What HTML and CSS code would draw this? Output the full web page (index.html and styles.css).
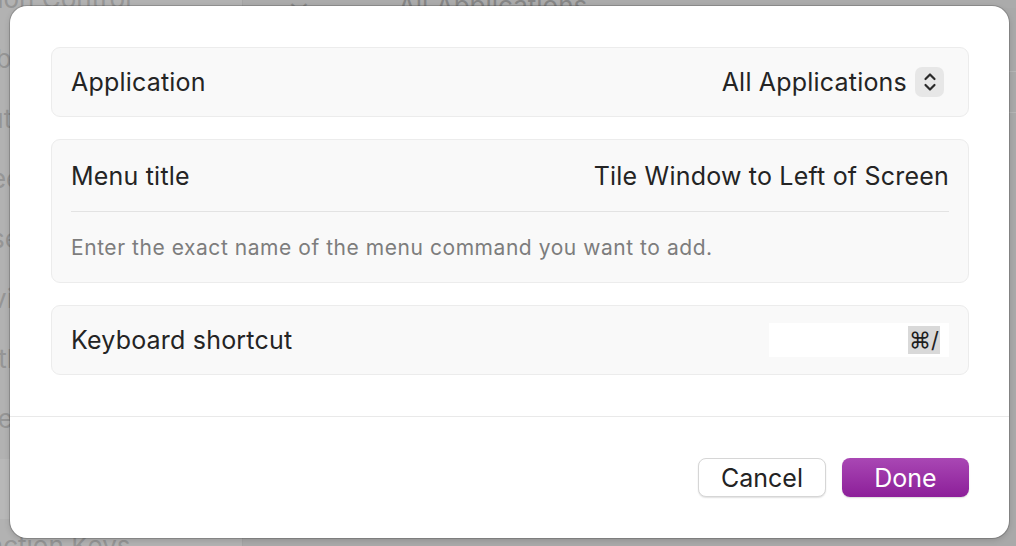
FILE: index.html
```html
<!DOCTYPE html>
<html>
<head>
<meta charset="utf-8">
<link rel="stylesheet" href="styles.css">
</head>
<body>
<div class="backdrop">
  <div class="bg-sidebar">
    <div class="bg-item first">Mission Control</div>
    <div class="bg-item">Keyboard</div>
    <div class="bg-item">Input Sources</div>
    <div class="bg-item">Screenshots</div>
    <div class="bg-item">Presentation</div>
    <div class="bg-item">Services</div>
    <div class="bg-item">Spotlight</div>
    <div class="bg-item">Accessibility</div>
    <div class="bg-item sel">App Shortcuts</div>
    <div class="bg-item last">Function Keys</div>
  </div>
  <div class="bg-main">
    <div class="bg-head"><span class="bg-chev">⌄</span><span class="bg-app">All Applications</span></div>
    <div class="bg-line"></div>
    <div class="bg-line second"></div>
  </div>
</div>

<div class="dialog">
  <div class="content">
    <div class="group">
      <div class="row">
        <span class="label">Application</span>
        <div class="popup">
          <span class="value">All Applications</span>
          <span class="stepper">
            <svg width="14" height="22" viewBox="0 0 14 22"><path d="M2.5 8 L7 3.5 L11.5 8" fill="none" stroke="#2a2a2a" stroke-width="2.2" stroke-linecap="round" stroke-linejoin="round"/><path d="M2.5 14 L7 18.5 L11.5 14" fill="none" stroke="#2a2a2a" stroke-width="2.2" stroke-linecap="round" stroke-linejoin="round"/></svg>
          </span>
        </div>
      </div>
    </div>

    <div class="group">
      <div class="row title-row">
        <span class="label">Menu title</span>
        <span class="value">Tile Window to Left of Screen</span>
      </div>
      <div class="sep"></div>
      <div class="row hint-row">
        <span class="hint">Enter the exact name of the menu command you want to add.</span>
      </div>
    </div>

    <div class="group">
      <div class="row">
        <span class="label">Keyboard shortcut</span>
        <div class="shortcut"><span class="keys">⌘/</span></div>
      </div>
    </div>
  </div>

  <div class="footer">
    <button class="btn cancel">Cancel</button>
    <button class="btn done">Done</button>
  </div>
</div>
</body>
</html>
```

FILE: styles.css
```css
html, body {
  margin: 0;
  padding: 0;
  width: 1016px;
  height: 546px;
  overflow: hidden;
  font-family: "Inter", "Liberation Sans", sans-serif;
}

.backdrop {
  width: 1016px;
  height: 546px;
  display: flex;
  background: #a9a9a9;
  color: #959595;
}

.bg-sidebar {
  width: 242px;
  background: #b2b2b2;
  border-right: 1px solid #a4a4a4;
  display: flex;
  flex-direction: column;
  overflow: hidden;
}

.bg-item {
  flex: none;
  height: 60px;
  width: 80px;
  overflow: hidden;
  line-height: 40px;
  font-size: 26px;
  margin-left: -50px;
  white-space: nowrap;
}

.bg-item.first {
  width: auto;
  margin-top: -21px;
  margin-left: -60px;
}

.bg-item.sel {
  width: 292px;
  background: #b8b8b8;
  color: transparent;
}

.bg-item.last {
  width: auto;
  margin-left: -42px;
  margin-top: 7px;
}

.bg-main {
  flex: 1;
  display: flex;
  flex-direction: column;
}

.bg-head {
  height: 8px;
  overflow: hidden;
  display: flex;
  align-items: flex-end;
  background: #ababab;
}

.bg-chev {
  margin-left: 45px;
  font-size: 28px;
  line-height: 10px;
  height: 10px;
  color: #8a8a8a;
}

.bg-app {
  margin-left: 88px;
  font-size: 26px;
  line-height: 16px;
  height: 10px;
  color: #858585;
}

.bg-line {
  height: 1px;
  background: #b6b6b6;
  margin-top: 63px;
}

.bg-line.second {
  margin-top: 40px;
}

.dialog {
  position: absolute;
  left: 10px;
  top: 6px;
  width: 999px;
  height: 532px;
  box-sizing: border-box;
  background: #ffffff;
  border-radius: 17px;
  box-shadow: 0 0 0 1px rgba(0,0,0,0.16), 0 2px 6px rgba(0,0,0,0.16);
  display: flex;
  flex-direction: column;
  color: #242424;
}

.content {
  padding: 41px 40px 0 41px;
  display: flex;
  flex-direction: column;
  gap: 22px;
  box-sizing: border-box;
  border-bottom: 1px solid #e9e9e9;
  flex: none;
  height: 411px;
}

.group {
  background: #f9f9f9;
  border: 1px solid #ececec;
  border-radius: 9px;
  display: flex;
  flex-direction: column;
}

.row {
  height: 68px;
  padding: 0 19px 0 19px;
  display: flex;
  align-items: center;
  justify-content: space-between;
}

.title-row {
  height: 71px;
}

.hint-row {
  height: 70px;
}

.label, .value {
  font-size: 25px;
  letter-spacing: 0.2px;
}

.popup {
  display: flex;
  align-items: center;
  gap: 8px;
  margin-right: 5px;
}

.stepper {
  width: 29px;
  height: 30px;
  background: #e7e7e7;
  border-radius: 7px;
  display: flex;
  align-items: center;
  justify-content: center;
}

.sep {
  height: 1px;
  background: #e3e3e3;
  margin: 0 19px 0 19px;
}

.hint {
  font-size: 21px;
  color: #7d7d7d;
  letter-spacing: 0.55px;
}

.shortcut {
  width: 180px;
  height: 34px;
  background: #ffffff;
  display: flex;
  align-items: center;
  justify-content: flex-end;
  padding-right: 9px;
  box-sizing: border-box;
}

.keys {
  background: #d9d9d9;
  font-size: 22px;
  line-height: 28px;
  padding: 0 1px;
  color: #1f1f1f;
}

.footer {
  flex: 1;
  display: flex;
  justify-content: flex-end;
  align-items: flex-end;
  gap: 16px;
  padding: 0 40px 41px 0;
}

.btn {
  width: 128px;
  height: 39px;
  border-radius: 8px;
  font-family: "Inter", "Liberation Sans", sans-serif;
  font-size: 25px;
  padding: 0;
  box-sizing: border-box;
}

.cancel {
  background: #ffffff;
  color: #232323;
  border: 1px solid #d6d6d6;
  box-shadow: 0 1px 1.5px rgba(0,0,0,0.12);
}

.done {
  width: 127px;
  color: #ffffff;
  border: none;
  background: linear-gradient(#a947b4, #8c1f99);
  box-shadow: 0 1px 1.5px rgba(0,0,0,0.15);
}
```
